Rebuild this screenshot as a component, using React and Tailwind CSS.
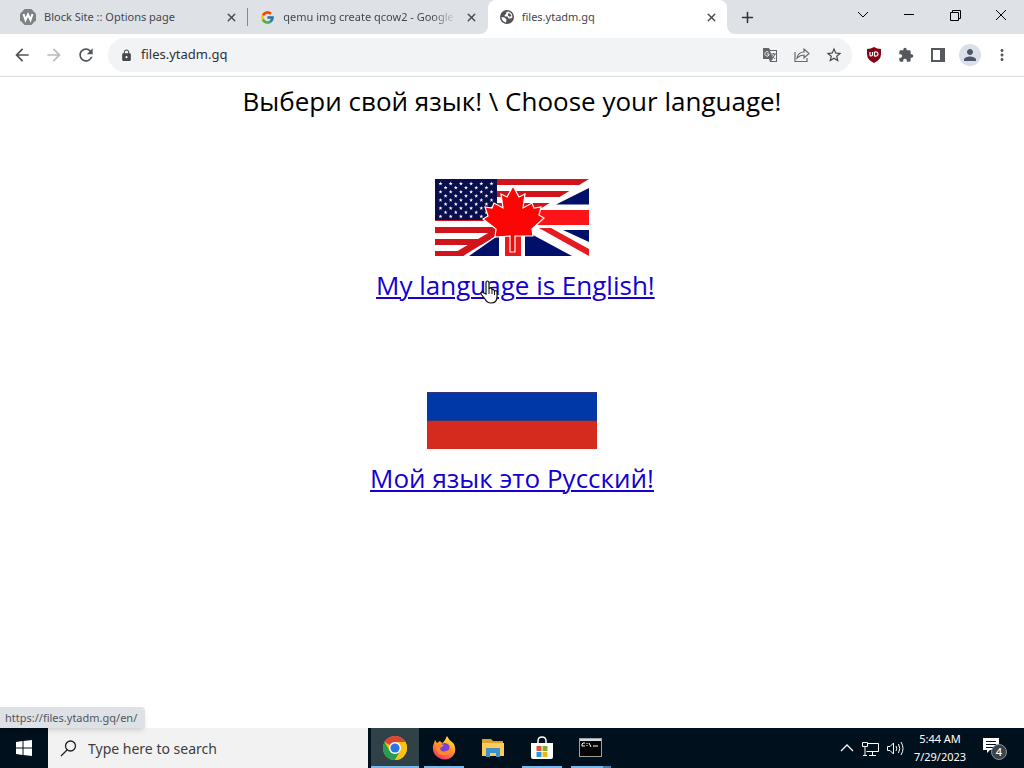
import React from "react";
import { MdArrowBack, MdArrowForward, MdRefresh, MdLock, MdStarBorder, MdExtension, MdPerson, MdMoreVert } from "react-icons/md";
import { FcGoogle } from "react-icons/fc";
import { X, Plus } from "lucide-react";

function EnglishFlag() {
  const stars = [];
  for (let r = 0; r < 9; r++) {
    const n = r % 2 ? 5 : 6;
    for (let c = 0; c < n; c++) stars.push([5.5 + c * 10.2 + (r % 2 ? 5.1 : 0), 4.6 + r * 4.1]);
  }
  return (
    <svg width="154" height="77" viewBox="0 0 154 77" role="img" aria-label="English">
      <rect width="154" height="77" fill="#fff" />
      {[0, 12, 24, 36, 48, 60].map((y) => (
        <rect key={y} y={y} width="154" height="6" fill="#d3131b" />
      ))}
      <rect y="72" width="30" height="5" fill="#d3131b" />
      <path d="M154 0 28 77H154Z" fill="#fff" />
      <path d="M154 9 121 25.500H154Z" fill="#00106a" />
      <path d="M14 77 60 50H72L28 77Z" fill="#d3131b" />
      <path d="M64 56V77H34Z" fill="#00106a" />
      <path d="M90 56V77H137L98 56Z" fill="#00106a" />
      <path d="M128 51H154V63Z" fill="#00106a" />
      <path d="M104 49H116L154 70V77Z" fill="#e41b20" />
      <rect width="62" height="41" fill="#080f4c" />
      {stars.map(([x, y], i) => (
        <path key={i} d="M0-2 .5-.6 2-.6.8.3 1.2 1.8 0 .9-1.2 1.8-.8.3-2-.6-.5-.6Z" fill="#fff" transform={`translate(${x} ${y})`} />
      ))}
      <rect x="82" y="31" width="72" height="15" fill="#fb1418" />
      <rect x="65" y="50" width="25" height="27" fill="#fff" />
      <rect x="70" y="50" width="16" height="27" fill="#e9191d" />
      <path d="M78 7 84 18 90 15 88 29 97 24 99 29 106 28 104 36 109 39 97 50 98 57 80 57V73H75V57L60 58 61 50 48 40 53 37 50 28 57 29 59 24 68 29 66 15 72 18Z" fill="#fb0505" stroke="#fff" strokeWidth="1.200" />
    </svg>
  );
}

function GlobeIcon() {
  return (
    <svg width="14" height="14" viewBox="0 0 14 14" className="shrink-0">
      <circle cx="7" cy="7" r="7" fill="#505358" />
      <path d="M8 1.600 6 2.500 6.200 4 4.500 5 5 6.500 7.500 6.500 8.500 8.500 11 8.500 12.300 7.500A5.500 5.500 0 0 0 8 1.600Z" fill="#fff" />
      <path d="M8 3.500H10L11.500 6 9.500 6.800 8 5.500Z" fill="#505358" />
      <path d="M1.500 7 4.500 7.500 6.500 9.500 6 12.400A5.600 5.600 0 0 1 1.500 7Z" fill="#fff" />
    </svg>
  );
}

function WordIcon() {
  return (
    <svg width="16" height="16" viewBox="0 0 16 16" className="shrink-0">
      <path d="M4.700 0H11.300L16 4.700V11.300L11.300 16H4.700L0 11.300V4.700Z" fill="#7f8184" />
      <path d="m3.500 5 2 6L8 5.500 10.500 11l2-6" fill="none" stroke="#fff" strokeWidth="2" />
    </svg>
  );
}

function ChromeIcon() {
  return (
    <svg width="24" height="24" viewBox="0 0 24 24">
      <circle cx="12" cy="12" r="12" fill="#fbc116" />
      <path d="M12 12 1.600 6A12 12 0 0 1 22.400 6Z" fill="#df4437" />
      <path d="M1.600 6A12 12 0 0 0 12 24l5.200-9L12 12 6.800 15Z" fill="#279c52" />
      <path d="M12 6H22.400A12 12 0 0 1 12 24l5.200-9Z" fill="#fbc116" />
      <circle cx="12" cy="12" r="6" fill="#fff" />
      <circle cx="12" cy="12" r="4.600" fill="#2877e5" />
    </svg>
  );
}

function FirefoxIcon() {
  return (
    <svg width="24" height="24" viewBox="0 0 24 24">
      <defs>
        <linearGradient id="fire" x1=".8" y1="0" x2=".3" y2="1">
          <stop offset="0" stopColor="#fff145" />
          <stop offset=".45" stopColor="#ff9d24" />
          <stop offset="1" stopColor="#f43269" />
        </linearGradient>
      </defs>
      <path d="M3 4 5 7 8 5 10 7Q12 6 13 4L15 0Q17 4 20 6L22 8Q25 15 21 20 15 26 7 22 0 18 1 10Z" fill="url(#fire)" />
      <circle cx="12.500" cy="12.500" r="5.500" fill="#7643d6" />
      <path d="M5 7 9 8 12 9 10 11 8 12Q9 17 14 15 19 14 17 9 22 16 15 19 5 21 4 12Z" fill="#ff892b" />
    </svg>
  );
}

function FolderIcon() {
  return (
    <svg width="22" height="19" viewBox="0 0 22 19">
      <path d="M0 1H9L11 3H21V18H0Z" fill="#dca12b" />
      <path d="M0 5H22V18H0Z" fill="#fccb58" />
      <path d="M4 10H18V19H14V15H8V19H4Z" fill="#3c92c9" />
    </svg>
  );
}

function StoreIcon() {
  return (
    <svg width="24" height="24" viewBox="0 0 24 24">
      <path d="M8 8V5Q8 1 12 1T16 5V8" fill="none" stroke="#fff" strokeWidth="1.500" />
      <path d="M1 7H23V21Q23 23 21 23H3Q1 23 1 21Z" fill="#fff" />
      <path d="M6.500 10H11.500V15H6.500Z" fill="#e05330" />
      <path d="M12.500 10H17.500V15H12.500Z" fill="#7eae27" />
      <path d="M6.500 16H11.500V21H6.500Z" fill="#2799d6" />
      <path d="M12.500 16H17.500V21H12.500Z" fill="#f2b51d" />
    </svg>
  );
}

function ConsoleIcon() {
  return (
    <svg width="24" height="20" viewBox="0 0 24 20">
      <rect x=".5" y=".5" width="22" height="18" fill="#050505" stroke="#9ca3a8" />
      <path d="M1 2H22" stroke="#d6dadd" strokeWidth="2" />
      <path d="M6 5H4L3 6V8H6M8 5V6M8 7V8M10 5l2 4M14 8H19" fill="none" stroke="#fff" />
    </svg>
  );
}

function Tab({ icon, title, active, fade, divider }) {
  return (
    <div className={"relative flex min-w-0 flex-1 items-center pl-3 pr-2" + (active ? " rounded-t-lg bg-white" : "") + (divider ? " my-2 border-r border-[#85888d]" : "")}>
      {active && (
        <>
          <svg className="absolute -left-2 bottom-0" width="8" height="8"><path d="M8 0V8H0A8 8 0 0 0 8 0Z" fill="#fff" /></svg>
          <svg className="absolute -right-2 bottom-0" width="8" height="8"><path d="M0 0V8H8A8 8 0 0 1 0 0Z" fill="#fff" /></svg>
        </>
      )}
      {icon}
      <span className={"ml-2 min-w-0 flex-1 overflow-hidden whitespace-nowrap" + (fade ? " [mask-image:linear-gradient(to_right,black_86%,transparent)]" : "")}>{title}</span>
      <button aria-label="Close tab" className="ml-2 grid size-4 place-items-center"><X size={13} strokeWidth={2.5} /></button>
    </div>
  );
}

const taskApps = [
  { name: "Chrome", icon: <ChromeIcon />, tile: "bg-[#304247]", bar: "w-12 bg-[#76b9ed]" },
  { name: "Firefox", icon: <FirefoxIcon />, tile: "", bar: "w-10 bg-[#76b9ed]" },
  { name: "File Explorer", icon: <FolderIcon />, tile: "", bar: "w-10" },
  { name: "Store", icon: <StoreIcon />, tile: "", bar: "w-10 bg-[#76b9ed]" },
  { name: "Command Prompt", icon: <ConsoleIcon />, tile: "", bar: "w-10 border-r-8 border-[#4c7da5] bg-[#76b9ed]" },
];

export default function App() {
  const cell = "grid h-8 w-8 place-items-center";
  const link = "text-[#1400d0] underline decoration-2 underline-offset-2";
  return (
    <div className="flex h-screen flex-col overflow-hidden bg-white font-['Noto_Sans',sans-serif]">
      <header className="shrink-0 border-b border-[#dadce0] text-[#45484d]">
        <div className="flex h-[34px] bg-[#dee1e6] text-[11px]">
          <div className="flex w-[71%] min-w-0 pl-2">
            <Tab icon={<WordIcon />} title="Block Site :: Options page" divider />
            <Tab icon={<FcGoogle size={15} className="shrink-0" />} title="qemu img create qcow2 - Google" fade />
            <Tab icon={<GlobeIcon />} title="files.ytadm.gq" active />
          </div>
          <button aria-label="New tab" className="grid w-10 place-items-center text-[#303338]"><Plus size={17} strokeWidth={2.2} /></button>
          <div className="ml-auto flex text-black">
            <button aria-label="Search tabs" className="grid w-[46px] place-items-center pb-1"><svg width="12" height="8" viewBox="0 0 12 8"><path d="m1 1 5 5 5-5" fill="none" stroke="currentColor" /></svg></button>
            <button aria-label="Minimize" className="grid w-[46px] place-items-center pb-1"><svg width="10" height="10"><path d="M0 4.500H10" stroke="currentColor" /></svg></button>
            <button aria-label="Restore" className="grid w-[46px] place-items-center pb-1"><svg width="11" height="11"><path d="M.5 2.500H8.500V10.500H.5ZM2.500 2.500V.5H10.500V8.500H8.500" fill="none" stroke="currentColor" /></svg></button>
            <button aria-label="Close" className="grid w-[46px] place-items-center pb-1"><svg width="12" height="12"><path d="m1 1 10 10M11 1 1 11" stroke="currentColor" /></svg></button>
          </div>
        </div>
        <div className="flex h-[42px] items-center">
          <nav className="flex w-[108px] shrink-0 gap-3 pl-3 text-[#505357]">
            <button aria-label="Back"><MdArrowBack size={20} /></button>
            <button aria-label="Forward" className="text-[#b9bbbe]"><MdArrowForward size={20} /></button>
            <button aria-label="Reload"><MdRefresh size={20} /></button>
          </nav>
          <div className="flex h-[34px] min-w-0 flex-1 items-center rounded-full bg-[#f1f3f4] pl-3">
            <MdLock size={13} className="shrink-0" />
            <input aria-label="Address" defaultValue="files.ytadm.gq" className="ml-2 min-w-0 flex-1 bg-transparent text-[13px] text-[#303236] outline-none" />
            <div className="flex items-center pr-0.5">
              <button aria-label="Translate" className={cell}><svg width="16" height="16" viewBox="0 0 16 16"><path d="M1 1H7L8 3H15V15H8L7 12H1Z" fill="#626569" /><path d="M8 4H14V14H9L11 12Z" fill="#f1f3f4" /><path d="M6.500 5.200A2.200 2.200 0 1 0 7 8V7H5" fill="none" stroke="#f1f3f4" /><path d="M9 7H14M11.500 6V7M13 7Q12 10 10 11M10 8Q11 10 13 12" fill="none" stroke="#626569" /></svg></button>
              <button aria-label="Share" className={cell}><svg width="16" height="16" viewBox="0 0 16 16" fill="none" stroke="#66696d" strokeWidth="1.200"><path d="M1 5V14.500H13V11M3 11Q4 5 10 5V2L15 6.500 10 11V8Q6 8 3 11Z" /></svg></button>
              <button aria-label="Bookmark" className={cell}><MdStarBorder size={18} /></button>
            </div>
          </div>
          <div className="flex items-center px-1.5 text-[#55585d]">
            <button aria-label="uBlock" className={cell}><svg width="16" height="18" viewBox="0 0 16 18"><path d="M8 1Q11 3 15 3V8Q15 14 8 17 1 14 1 8V3Q5 3 8 1Z" fill="#820515" /><path d="M4 6V9Q4 10 5 10T6.500 9V6M8.500 6V10Q12 10.500 12 8T8.500 6" fill="none" stroke="#fff" strokeWidth="1.200" /></svg></button>
            <button aria-label="Extensions" className={cell}><MdExtension size={16} /></button>
            <button aria-label="Side panel" className={cell}><svg width="14" height="14"><path d="M1 1H13V13H1Z" fill="none" stroke="currentColor" strokeWidth="2" /><path d="M9 1H13V13H9Z" fill="currentColor" /></svg></button>
            <button aria-label="Profile" className={cell}><span className="grid size-[22px] place-items-center rounded-full bg-[#dadfe8] text-[#4b5468]"><MdPerson size={18} /></span></button>
            <button aria-label="Menu" className={cell}><MdMoreVert size={18} /></button>
          </div>
        </div>
      </header>
      <main className="relative min-h-0 flex-1 text-center font-['Open_Sans',sans-serif] text-[26px]">
        <h1 className="pt-1.5 leading-9 text-black">Выбери свой язык! \ Choose your language!</h1>
        <div className="flex flex-col items-center pt-[60px]">
          <a href="/en/" aria-label="English"><EnglishFlag /></a>
          <p className="mt-[11px] leading-9">&nbsp;<a href="/en/" className={link}>My language is English!</a></p>
        </div>
        <div className="flex flex-col items-center pt-[61px]">
          <a href="/ru/" aria-label="Русский"><svg width="170" height="85"><rect width="170" height="85" fill="#fff" /><rect y="28" width="170" height="29" fill="#0038a8" /><rect y="56" width="170" height="29" fill="#d52b1e" /><path d="M0 28.500H170M0 56.500H170" stroke="#313475" /></svg></a>
          <p className="mt-[11px] leading-9"><a href="/ru/" className={link}>Мой язык это Русский!</a></p>
        </div>
        <svg className="absolute left-1/2 top-[203px] -ml-[32px]" width="18" height="24" viewBox="0 0 18 24"><path d="M6 14V3Q6 1 7.500 1T9 3V9Q9 8 10.500 8T12 10Q12 9 13.500 9.500L14.500 11Q17 10 17 12V17Q17 23 11 23 7 23 5 19L1 14Q1 11 4 13Z" fill="#fff" stroke="#111" strokeWidth="1.200" /><path d="M9 9V14M12 10V14M14.500 11V15" stroke="#111" /></svg>
        <div className="absolute bottom-0 left-0 rounded-tr bg-[#dee1e6] pl-[5px] pr-2 text-left font-['Noto_Sans',sans-serif] text-[11px] leading-[21px] text-[#54575b] shadow-md">https://files.ytadm.gq/en/</div>
      </main>
      <footer className="flex h-10 shrink-0 bg-[#00101c] text-white">
        <button aria-label="Start" className="grid w-12 place-items-center"><svg width="16" height="16" viewBox="0 0 16 16" fill="#fff"><path d="M0 2 6.500 1V7.500H0ZM7.500 1 16 0V7.500H7.500ZM0 8.500H6.500V15L0 14ZM7.500 8.500H16V16L7.500 15Z" /></svg></button>
        <label className="flex w-80 items-center bg-[#f2f2f2] pl-3 text-[#303030]">
          <svg width="17" height="17" viewBox="0 0 17 17" fill="none" stroke="#202020" strokeWidth="1.300"><circle cx="10.500" cy="6" r="5" /><path d="M7 10 1 16" /></svg>
          <input aria-label="Search" placeholder="Type here to search" className="ml-[11px] min-w-0 flex-1 bg-transparent text-[14px] outline-none placeholder:text-[#3d3d3d]" />
        </label>
        <div className="ml-[3px] flex gap-px">
          {taskApps.map((a) => (
            <button key={a.name} aria-label={a.name} className={"flex w-12 flex-col items-center " + a.tile}>
              <span className="grid flex-1 place-items-center pt-px">{a.icon}</span>
              <span className={"h-0.5 " + a.bar} />
            </button>
          ))}
        </div>
        <div className="ml-auto flex items-center">
          <button aria-label="Hidden icons" className="mr-2"><svg width="14" height="8"><path d="m1 7 6-6 6 6" fill="none" stroke="#fff" strokeWidth="1.300" /></svg></button>
          <button aria-label="Network" className="mr-2"><svg width="17" height="15" fill="none" stroke="#fff"><path d="M5.500 2.500H16.500V10.500H4.500M10.500 10.500V14M7 14.500H14M.5 1.500H5.500V5.500H.5ZM3 5.500V14M1 14.500H5" /></svg></button>
          <button aria-label="Volume" className="mr-1.5"><svg width="17" height="15" fill="none" stroke="#fff"><path d="M.5 5.500H3L6.500 2V13L3 9.500H.5ZM9 5Q10.500 7.500 9 10M11.500 3Q14 7.500 11.500 12M14 1Q18 7.500 14 14" /></svg></button>
          <div className="w-[60px] whitespace-nowrap text-center text-[11px] leading-[18px]"><div>5:44 AM</div><div>7/29/2023</div></div>
          <button aria-label="4 notifications" className="relative ml-3 mr-4 h-6 w-[26px]"><svg width="26" height="24"><path d="M1 2H17V14H8L5 17V14H1Z" fill="#fff" /><path d="M4 5.500H14M4 8.500H14M4 11.500H12" stroke="#00101c" /><circle cx="17" cy="16" r="7.500" fill="#38434b" stroke="#899198" /></svg><span className="absolute bottom-0 right-1.5 text-[11px] font-medium leading-4">4</span></button>
        </div>
      </footer>
    </div>
  );
}
